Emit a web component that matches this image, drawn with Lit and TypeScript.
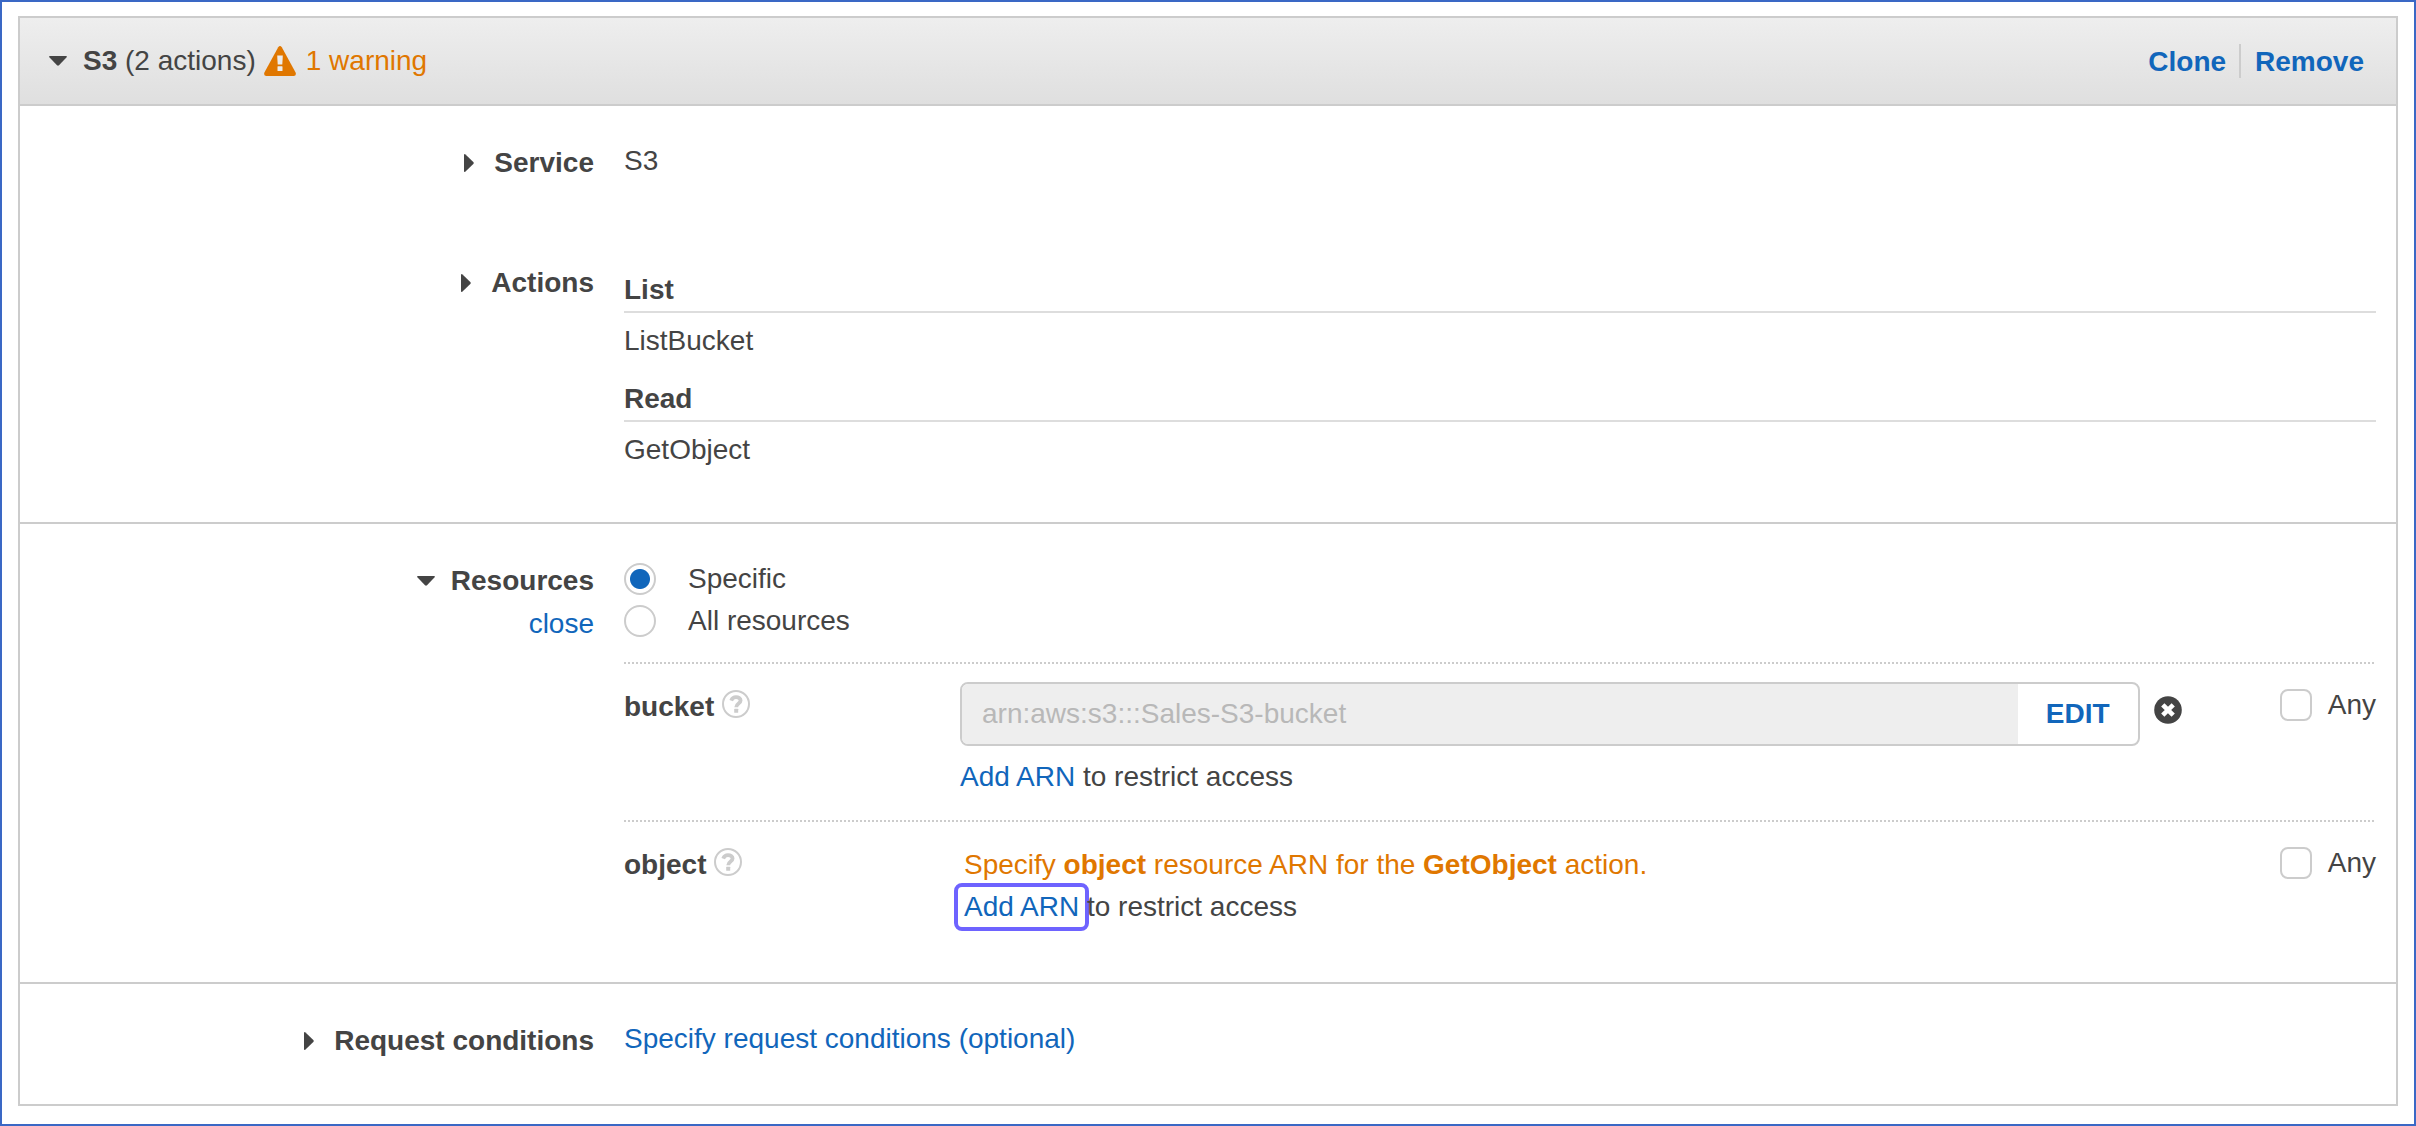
import { LitElement, html, css } from "lit";
import { customElement, state } from "lit/decorators.js";

const caretDown = html`<svg class="caret-down" viewBox="0 0 18 10" width="18" height="10" aria-hidden="true">
  <path d="M1 0H17Q18.6 .2 17.4 1.5L10 9.3Q9 10.2 8 9.3L.6 1.5Q-.6 .2 1 0Z" fill="currentColor" />
</svg>`;

const caretRight = html`<svg class="caret-right" viewBox="0 0 10 18" width="10" height="18" aria-hidden="true">
  <path d="M0 1Q.2-.6 1.5.6L9.3 8Q10.2 9 9.3 10L1.5 17.4Q.2 18.6 0 17Z" fill="currentColor" />
</svg>`;

const warningIcon = html`<svg class="warning-icon" viewBox="0 0 32 30" width="32" height="30" aria-hidden="true">
  <path d="M14.2 1.2Q16-1.2 17.8 1.2L31.6 26.6Q32.6 29.6 29.6 30H2.4Q-.6 29.6.4 26.6Z" fill="#e07700" />
  <path d="M13.2 9.4H18.8L18.3 18.4H13.7Z" fill="#ececec" />
  <rect x="13.5" y="20.2" width="5" height="4.8" rx=".6" fill="#ececec" />
</svg>`;

const helpIcon = html`<svg viewBox="0 0 28 28" width="28" height="28" aria-hidden="true">
  <circle cx="14" cy="14" r="13" fill="none" stroke="#ccc" stroke-width="2" />
  <path d="M9.2 10.6C10.2 8 12 7.2 14 7.2C16.6 7.2 18.6 8.6 18.6 10.6C18.6 13.6 14.2 13.4 14.2 17.2" fill="none" stroke="#ccc" stroke-width="3.8" />
  <rect x="12.2" y="18.8" width="4" height="4" rx=".4" fill="#ccc" />
</svg>`;

const removeIcon = html`<svg viewBox="0 0 28 28" width="28" height="28" aria-hidden="true">
  <circle cx="14" cy="14" r="13.8" fill="#444" />
  <path d="M10.4 10.4L17.6 17.6M17.6 10.4L10.4 17.6" stroke="#fff" stroke-width="4.6" stroke-linecap="square" />
</svg>`;

@customElement("app-root")
export class AppRoot extends LitElement {
  @state() private scope = "specific";

  private groups = [
    { level: "List", actions: ["ListBucket"] },
    { level: "Read", actions: ["GetObject"] },
  ];

  static styles = css`
    :host {
      display: block;
      box-sizing: border-box;
      min-height: 100vh;
      padding: 14px 16px 18px;
      border: 2px solid #3a68c5;
      background: #fff;
      color: #444;
      font-family: "Liberation Sans", Arial, sans-serif;
      font-size: 28px;
      line-height: 42px;
    }
    * { box-sizing: border-box; }
    svg { display: block; flex: none; }
    h3, p, ul { margin: 0; padding: 0; font-size: inherit; }
    ul { list-style: none; }
    button, input {
      margin: 0;
      padding: 0;
      border: 0;
      background: none;
      color: inherit;
      font: inherit;
    }
    button { cursor: pointer; }
    a { color: #16b; text-decoration: none; }
    .link { color: #16b; }
    .panel { border: 2px solid #ccc; }
    .header {
      display: flex;
      align-items: center;
      justify-content: space-between;
      padding: 22px 32px 22px 29px;
      border-bottom: 2px solid #ccc;
      background: linear-gradient(#eee, #dfdfdf);
    }
    .summary { display: flex; align-items: center; }
    .toggle { display: flex; align-items: center; gap: 16px; font-weight: bold; }
    .summary .toggle { font-weight: normal; }
    .warning { display: flex; align-items: center; gap: 10px; margin-left: 8px; color: #e07700; }
    .tools {
      display: flex;
      align-items: center;
      padding-top: 2px;
      font-weight: bold;
      line-height: 40px;
      text-shadow: 0 2px 0 #fff;
    }
    .tools .link + .link { position: relative; margin-left: 13px; padding-left: 16px; }
    .tools .link + .link::before {
      content: "";
      position: absolute;
      left: 0;
      top: 2px;
      bottom: 4px;
      width: 2px;
      background: #ccc;
    }
    .section { padding: 34px 20px 42px; }
    .section + .section { border-top: 2px solid #ccc; }
    .field { display: grid; grid-template-columns: 25% minmax(0, 1fr); }
    .field + .field { margin-top: 76px; }
    .name {
      display: flex;
      flex-direction: column;
      align-items: flex-end;
      gap: 1px;
      padding: 2px 30px 0 0;
    }
    .name .toggle:has(.caret-right) { gap: 20px; }
    .actions { padding: 9px 0; }
    .group + .group { margin-top: 16px; }
    .group h3 { border-bottom: 2px solid #ddd; margin-bottom: 7px; }
    .choice { display: flex; align-items: center; width: max-content; }
    .choice input {
      appearance: none;
      width: 32px;
      height: 32px;
      border: 2px solid #ccc;
      background: #fff;
    }
    .choice input[type="radio"] { border-radius: 50%; margin-right: 32px; }
    .choice input[type="radio"]:checked {
      background: radial-gradient(circle, #16b 0 9.5px, #fff 10.5px);
    }
    .choice input[type="checkbox"] { border-radius: 8px; margin-right: 16px; }
    .scopes { margin-bottom: 20px; }
    .resource {
      display: grid;
      grid-template-columns: 336px minmax(0, 1fr) auto;
      padding: 20px 0 22px;
      background: repeating-linear-gradient(90deg, #ccc 0 2px, transparent 2px 4px) top left / 100% 2px no-repeat;
    }
    .resource:last-child { padding-bottom: 12px; }
    .kind { display: flex; align-items: flex-start; gap: 8px; padding-top: 4px; }
    .kind button { margin-top: 4px; }
    .any { padding-top: 2px; padding-left: 98px; }
    .entry { display: flex; align-items: flex-start; gap: 14px; margin-bottom: 10px; }
    .entry > button { margin-top: 14px; }
    .arn {
      display: flex;
      flex: 1;
      min-width: 0;
      height: 64px;
      border: 2px solid #ccc;
      border-radius: 8px;
      overflow: hidden;
    }
    .arn input { flex: 1; min-width: 0; padding: 0 20px; background: #eee; color: #b8b8b8; }
    .arn button { width: 120px; font-weight: bold; color: #16b; }
    .missing { padding: 4px 0 0 4px; }
    .alert { color: #e07700; }
    .highlight {
      height: 48px;
      margin: -4px -10px;
      padding: 0 6px;
      border: 4px solid #6e63ff;
      border-radius: 8px;
      line-height: 40px;
    }
  `;

  private any(id: string) {
    return html`<div class="any">
      <label class="choice"><input type="checkbox" name=${id} />Any</label>
    </div>`;
  }

  private radio(value: string, text: string) {
    return html`<label class="choice">
      <input
        type="radio"
        name="scope"
        .checked=${this.scope === value}
        @change=${() => (this.scope = value)}
      />${text}</label>`;
  }

  private kind(text: string) {
    return html`<div class="kind">
      <strong>${text}</strong>
      <button type="button" aria-label="Help">${helpIcon}</button>
    </div>`;
  }

  render() {
    return html`
      <main class="panel">
        <header class="header">
          <div class="summary">
            <button class="toggle" type="button" aria-expanded="true">
              ${caretDown}<span><strong>S3</strong> (2 actions)</span>
            </button>
            <span class="warning">${warningIcon}1 warning</span>
          </div>
          <div class="tools">
            <button class="link" type="button">Clone</button>
            <button class="link" type="button">Remove</button>
          </div>
        </header>

        <section class="section">
          <div class="field">
            <div class="name">
              <button class="toggle" type="button" aria-expanded="false">${caretRight}Service</button>
            </div>
            <p>S3</p>
          </div>
          <div class="field">
            <div class="name">
              <button class="toggle" type="button" aria-expanded="false">${caretRight}Actions</button>
            </div>
            <div class="actions">
              ${this.groups.map(
                (g) => html`<div class="group">
                  <h3>${g.level}</h3>
                  <ul>${g.actions.map((a) => html`<li>${a}</li>`)}</ul>
                </div>`
              )}
            </div>
          </div>
        </section>

        <section class="section">
          <div class="field">
            <div class="name">
              <button class="toggle" type="button" aria-expanded="true">${caretDown}Resources</button>
              <button class="link" type="button">close</button>
            </div>
            <div>
              <div class="scopes">
                ${this.radio("specific", "Specific")} ${this.radio("all", "All resources")}
              </div>
              <div class="resource">
                ${this.kind("bucket")}
                <div>
                  <div class="entry">
                    <div class="arn">
                      <input type="text" aria-label="Bucket ARN" readonly value="arn:aws:s3:::Sales-S3-bucket" />
                      <button type="button">EDIT</button>
                    </div>
                    <button type="button" aria-label="Delete">${removeIcon}</button>
                  </div>
                  <p><a href="#bucket">Add ARN</a> to restrict access</p>
                </div>
                ${this.any("bucket-any")}
              </div>
              <div class="resource">
                ${this.kind("object")}
                <div class="missing">
                  <p class="alert">
                    Specify <strong>object</strong> resource ARN for the <strong>GetObject</strong> action.
                  </p>
                  <p><button class="link highlight" type="button">Add ARN</button> to restrict access</p>
                </div>
                ${this.any("object-any")}
              </div>
            </div>
          </div>
        </section>

        <section class="section">
          <div class="field">
            <div class="name">
              <button class="toggle" type="button" aria-expanded="false">${caretRight}Request conditions</button>
            </div>
            <p><a href="#conditions">Specify request conditions (optional)</a></p>
          </div>
        </section>
      </main>
    `;
  }
}
